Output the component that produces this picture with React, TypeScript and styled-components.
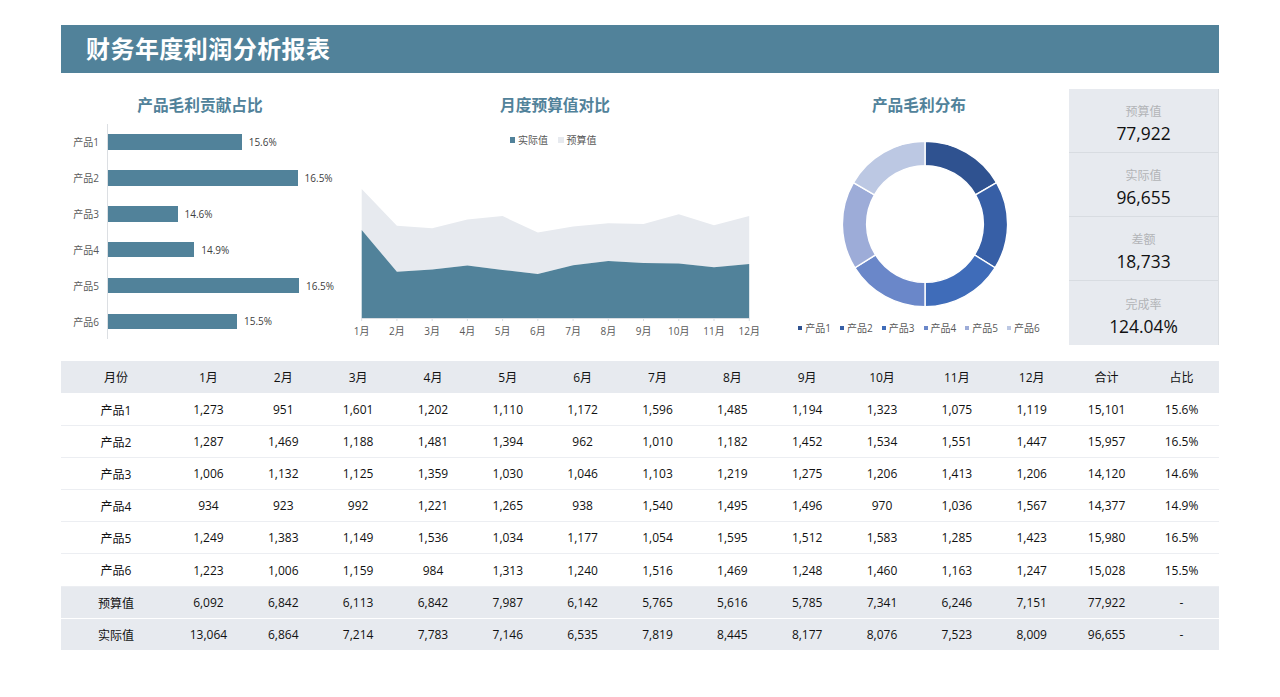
import React from "react";
import styled, { createGlobalStyle } from "styled-components";

const FONT = `"Open Sans", "Noto Sans CJK SC", sans-serif`;
const TEAL = "#51829a";
const PALE = "#e7eaef";

const Global = createGlobalStyle`
  html, body { margin: 0; padding: 0; background: #fff; }
  body { font-family: ${FONT}; }
`;

const Page = styled.main`
  padding: 25px 61px 0;
  width: 1158px;
`;
const Banner = styled.header`
  height: 47.7px;
  box-sizing: border-box;
  background: ${TEAL};
  display: flex;
  align-items: center;
  padding: 0 0 3px 25px;
`;
const BannerTitle = styled.h1`
  margin: 0;
  font-size: 24px;
  font-weight: 700;
  color: #fff;
  letter-spacing: 0.45px;
`;
const ChartsRow = styled.section`
  height: 288.3px;
  display: grid;
  grid-template-columns: 278px 432px 296px 152px;
  align-items: start;
`;
const Panel = styled.div`
  padding-top: 22px;
  display: flex;
  flex-direction: column;
  align-items: center;
`;
const PanelTitle = styled.h2`
  margin: 0;
  font-size: 15.7px;
  line-height: 21px;
  font-weight: 700;
  color: ${TEAL};
`;

const BarList = styled.div`
  align-self: stretch;
  margin-top: 8.3px;
`;
const BarRow = styled.div`
  display: grid;
  grid-template-columns: 38px 1fr;
  column-gap: 8px;
  height: 35.92px;
`;
const BarLabel = styled.span`
  align-self: center;
  text-align: right;
  font-size: 10px;
  color: #595959;
`;
const BarPlot = styled.div`
  border-left: 1px solid #dcdfe3;
  display: flex;
  align-items: center;
  gap: 7px;
`;
const Bar = styled.div<{ $w: number }>`
  width: ${(p) => p.$w}px;
  height: 15.6px;
  background: ${TEAL};
`;
const BarValue = styled.span`
  font-size: 10px;
  color: #404040;
`;

const Legend = styled.div<{ $gap: number }>`
  display: flex;
  justify-content: center;
  gap: ${(p) => p.$gap}px;
  height: 14px;
`;
const LegendItem = styled.span<{ $gap: number }>`
  display: flex;
  align-items: center;
  gap: ${(p) => p.$gap}px;
  font-size: 10px;
  line-height: 14px;
  color: #595959;
`;
const Swatch = styled.i<{ $c: string; $s: number }>`
  display: block;
  width: ${(p) => p.$s}px;
  height: ${(p) => p.$s}px;
  background: ${(p) => p.$c};
`;
const AreaLegend = styled(Legend)`
  margin: 17.5px 4px 0 0;
`;
const AreaSvg = styled.svg`
  display: block;
  margin-top: 2.8px;
  font-family: ${FONT};
`;
const AxisText = styled.text`
  font-size: 10px;
  fill: #595959;
  text-anchor: middle;
`;
const DonutSvg = styled.svg`
  display: block;
  margin: 25px 0 0 12.6px;
`;
const DonutLegend = styled(Legend)`
  margin-top: 14.6px;
`;

const Kpis = styled.aside`
  margin-top: 16.3px;
  justify-self: end;
  box-sizing: border-box;
  width: 150px;
  height: 256.5px;
  display: grid;
  grid-template-rows: repeat(4, 1fr);
  background: ${PALE};
  border-right: 1px solid #dcdfe3;
`;
const Kpi = styled.div<{ $last?: boolean }>`
  display: flex;
  flex-direction: column;
  align-items: center;
  justify-content: center;
  padding-top: 8px;
  border-bottom: ${(p) => (p.$last ? "none" : "1px solid #d8dce1")};
`;
const KpiLabel = styled.span`
  font-size: 12px;
  line-height: 17px;
  color: #b2b4b7;
`;
const KpiValue = styled.span`
  font-size: 17.4px;
  line-height: 26px;
  color: #111;
`;

const Table = styled.table`
  width: 1158px;
  table-layout: fixed;
  border-collapse: separate;
  border-spacing: 0;
  font-size: 12px;
  color: #111;
`;
const Cell = styled.td<{ $shade?: boolean; $h: number }>`
  height: ${(p) => p.$h}px;
  padding: 1px 0 0;
  box-sizing: border-box;
  text-align: center;
  font-weight: 400;
  background: ${(p) => (p.$shade ? PALE : "#fff")};
  border-bottom: 1px solid ${(p) => (p.$shade ? "#fff" : "#eceef2")};
`;
const FirstCol = styled.col`
  width: 110px;
`;

const products = [
  { name: "产品1", pct: "15.6%", w: 133.7, vals: "1,273 951 1,601 1,202 1,110 1,172 1,596 1,485 1,194 1,323 1,075 1,119 15,101 15.6%" },
  { name: "产品2", pct: "16.5%", w: 189.6, vals: "1,287 1,469 1,188 1,481 1,394 962 1,010 1,182 1,452 1,534 1,551 1,447 15,957 16.5%" },
  { name: "产品3", pct: "14.6%", w: 69.5, vals: "1,006 1,132 1,125 1,359 1,030 1,046 1,103 1,219 1,275 1,206 1,413 1,206 14,120 14.6%" },
  { name: "产品4", pct: "14.9%", w: 86.3, vals: "934 923 992 1,221 1,265 938 1,540 1,495 1,496 970 1,036 1,567 14,377 14.9%" },
  { name: "产品5", pct: "16.5%", w: 191, vals: "1,249 1,383 1,149 1,536 1,034 1,177 1,054 1,595 1,512 1,583 1,285 1,423 15,980 16.5%" },
  { name: "产品6", pct: "15.5%", w: 129, vals: "1,223 1,006 1,159 984 1,313 1,240 1,516 1,469 1,248 1,460 1,163 1,247 15,028 15.5%" },
];
const budgetVals = "6,092 6,842 6,113 6,842 7,987 6,142 5,765 5,616 5,785 7,341 6,246 7,151 77,922 -";
const actualVals = "13,064 6,864 7,214 7,783 7,146 6,535 7,819 8,445 8,177 8,076 7,523 8,009 96,655 -";
const months = ["1月", "2月", "3月", "4月", "5月", "6月", "7月", "8月", "9月", "10月", "11月", "12月"];

const num = (s: string) => Number(s.replace(/,/g, ""));
const budget = budgetVals.split(" ").slice(0, 12).map(num);
const actual = actualVals.split(" ").slice(0, 12).map(num);

const X0 = 22.7;
const STEP = 35.23;
const BASE = 168;
const K = 88 / 13064;
const xAt = (i: number) => X0 + i * STEP;
const areaPath = (tops: number[], bottoms: number[] | null) => {
  const up = tops.map((v, i) => `${xAt(i).toFixed(1)},${(BASE - v * K).toFixed(1)}`);
  const down = bottoms
    ? bottoms.map((v, i) => `${xAt(i).toFixed(1)},${(BASE - v * K).toFixed(1)}`).reverse()
    : [`${xAt(11).toFixed(1)},${BASE}`, `${xAt(0).toFixed(1)},${BASE}`];
  return [...up, ...down].join(" ");
};

const donut = [
  { name: "产品1", c: "#2f5290", a: 60 },
  { name: "产品2", c: "#375fa6", a: 62 },
  { name: "产品3", c: "#3f6cb9", a: 58 },
  { name: "产品4", c: "#6a87c9", a: 58 },
  { name: "产品5", c: "#9dacd8", a: 62 },
  { name: "产品6", c: "#bcc8e3", a: 60 },
];
const polar = (r: number, deg: number) => {
  const t = (deg * Math.PI) / 180;
  return `${(83 + r * Math.sin(t)).toFixed(2)} ${(83 - r * Math.cos(t)).toFixed(2)}`;
};
const OUTER = 82.6;
const INNER = 58.4;
const segment = (from: number, to: number) =>
  `M${polar(OUTER, from)} A${OUTER} ${OUTER} 0 0 1 ${polar(OUTER, to)} L${polar(INNER, to)} A${INNER} ${INNER} 0 0 0 ${polar(INNER, from)} Z`;

const kpis = [
  ["预算值", "77,922"],
  ["实际值", "96,655"],
  ["差额", "18,733"],
  ["完成率", "124.04%"],
];

function Row({ head, vals, shade, h = 32 }: { head: string; vals: string[]; shade?: boolean; h?: number }) {
  return (
    <tr>
      <Cell $shade={shade} $h={h}>
        {head}
      </Cell>
      {vals.map((v, i) => (
        <Cell key={i} $shade={shade} $h={h}>
          {v}
        </Cell>
      ))}
    </tr>
  );
}

export default function App() {
  let angle = 0;
  const stacked = budget.map((b, i) => b + actual[i]);
  return (
    <Page>
      <Global />
      <Banner>
        <BannerTitle>财务年度利润分析报表</BannerTitle>
      </Banner>
      <ChartsRow>
        <Panel>
          <PanelTitle>产品毛利贡献占比</PanelTitle>
          <BarList>
            {products.map((p) => (
              <BarRow key={p.name}>
                <BarLabel>{p.name}</BarLabel>
                <BarPlot>
                  <Bar $w={p.w} />
                  <BarValue>{p.pct}</BarValue>
                </BarPlot>
              </BarRow>
            ))}
          </BarList>
        </Panel>
        <Panel>
          <PanelTitle>月度预算值对比</PanelTitle>
          <AreaLegend $gap={10}>
            <LegendItem $gap={3}>
              <Swatch $c={TEAL} $s={5.5} />
              实际值
            </LegendItem>
            <LegendItem $gap={3}>
              <Swatch $c={PALE} $s={5.5} />
              预算值
            </LegendItem>
          </AreaLegend>
          <AreaSvg width={432} height={195} viewBox="0 0 432 195">
            <polygon points={areaPath(stacked, actual)} fill={PALE} />
            <polygon points={areaPath(actual, null)} fill={TEAL} />
            <line x1={X0} x2={xAt(11)} y1={BASE + 0.5} y2={BASE + 0.5} stroke="#d9dde2" />
            {months.map((m, i) => (
              <g key={m}>
                <line x1={xAt(i)} x2={xAt(i)} y1={BASE} y2={BASE + 3} stroke="#d9dde2" />
                <AxisText x={xAt(i)} y={BASE + 16.5}>
                  {m}
                </AxisText>
              </g>
            ))}
          </AreaSvg>
        </Panel>
        <Panel>
          <PanelTitle>产品毛利分布</PanelTitle>
          <DonutSvg width={166} height={166} viewBox="0 0 166 166">
            {donut.map((d) => {
              const from = angle;
              angle += d.a;
              return <path key={d.name} d={segment(from, angle)} fill={d.c} stroke="#fff" strokeWidth={1.4} />;
            })}
          </DonutSvg>
          <DonutLegend $gap={9}>
            {donut.map((d) => (
              <LegendItem key={d.name} $gap={3}>
                <Swatch $c={d.c} $s={4} />
                {d.name}
              </LegendItem>
            ))}
          </DonutLegend>
        </Panel>
        <Kpis>
          {kpis.map(([label, value], i) => (
            <Kpi key={label} $last={i === 3}>
              <KpiLabel>{label}</KpiLabel>
              <KpiValue>{value}</KpiValue>
            </Kpi>
          ))}
        </Kpis>
      </ChartsRow>
      <Table>
        <colgroup>
          <FirstCol />
        </colgroup>
        <tbody>
          <Row head="月份" vals={[...months, "合计", "占比"]} shade h={33} />
          {products.map((p, i) => (
            <Row key={p.name} head={p.name} vals={p.vals.split(" ")} h={i === 5 ? 33 : 32} />
          ))}
          <Row head="预算值" vals={budgetVals.split(" ")} shade />
          <Row head="实际值" vals={actualVals.split(" ")} shade />
        </tbody>
      </Table>
    </Page>
  );
}
